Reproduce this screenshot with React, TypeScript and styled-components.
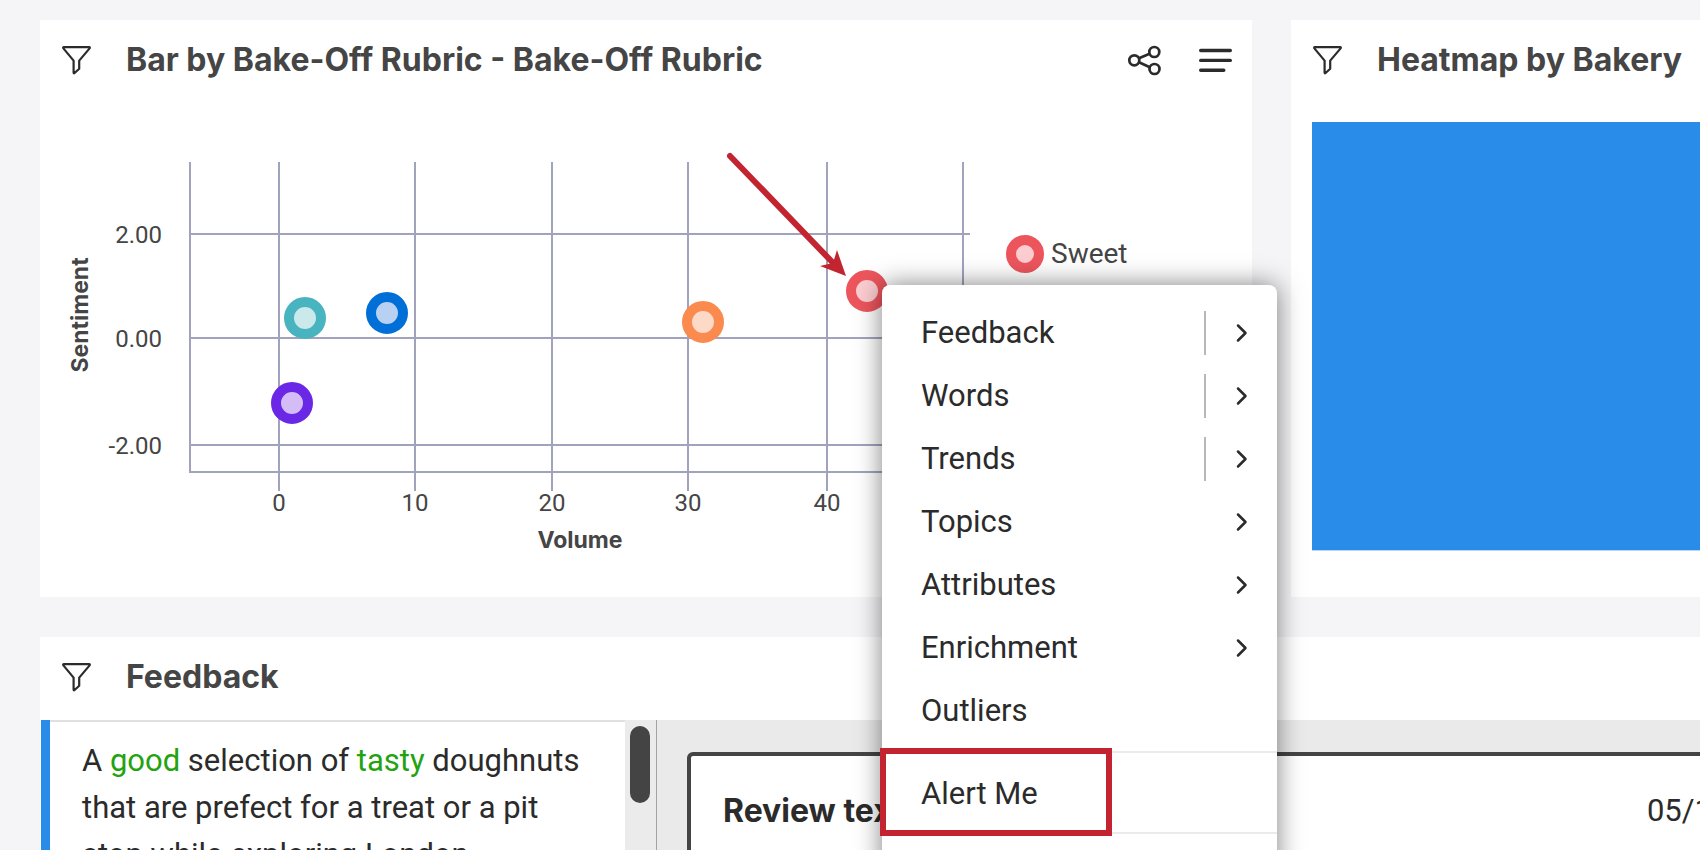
import React from 'react';
import styled, { createGlobalStyle } from 'styled-components';

const BODY_FONT = 'Roboto, "Liberation Sans", sans-serif';
const HEADING_FONT = 'Inter, "Liberation Sans", sans-serif';

const GlobalStyle = createGlobalStyle`
  *, *::before, *::after { box-sizing: border-box; }
  body {
    margin: 0;
    background: #f5f5f8;
    color: #2b2b2b;
    font-family: ${BODY_FONT};
    font-size: 31px;
  }
`;

const Page = styled.main`
  position: relative;
  display: flex;
  flex-direction: column;
  gap: 40px;
  height: 100vh;
  padding: 20px 0 0 40px;
  overflow: hidden;
`;

const TopRow = styled.div`
  display: grid;
  grid-template-columns: minmax(0, 1212fr) minmax(0, 409fr);
  gap: 39px;
`;

const Card = styled.section`
  display: flex;
  flex-direction: column;
  background: #fff;
`;

const ChartCard = styled(Card)`
  position: relative;
  height: 577px;
`;

const FeedbackCard = styled(Card)`
  flex: 1;
  min-height: 0;
`;

const CardHeader = styled.header`
  display: flex;
  flex: none;
  align-items: center;
  height: 83px;
  padding: 0 19px 3px;
`;

const IconButton = styled.button`
  display: flex;
  flex: none;
  align-items: center;
  justify-content: center;
  width: 35px;
  height: 40px;
  padding: 0;
  border: 0;
  background: none;
  color: #2b2b2b;
  cursor: pointer;
`;

const CardTitle = styled.h2`
  flex: 1;
  margin: 0 0 0 32px;
  color: #454545;
  font-family: ${HEADING_FONT};
  font-size: 32px;
  font-weight: 700;
  line-height: 40px;
  white-space: nowrap;
`;

const HeaderActions = styled.div`
  display: flex;
  gap: 36px;
`;

const ChartSvg = styled.svg`
  position: relative;
  display: block;
  width: 1212px;
  height: 494px;
`;

const Tick = styled.text`
  fill: #454545;
  font-family: ${BODY_FONT};
  font-size: 24px;
`;

const AxisTitle = styled.text`
  fill: #454545;
  font-family: ${HEADING_FONT};
  font-size: 23px;
  font-weight: 700;
  text-anchor: middle;
`;

const LegendLabel = styled.text`
  fill: #454545;
  font-family: ${BODY_FONT};
  font-size: 28px;
`;

const HeatmapCell = styled.div`
  height: 429px;
  margin: 19px 0 0 21px;
  border-bottom: 1px solid #b9d5f0;
  background: #288ce8;
`;

const FeedbackBody = styled.div`
  display: flex;
  flex: 1;
  min-height: 0;
`;

const ReviewList = styled.div`
  flex: none;
  width: 584px;
  margin-left: 1px;
  overflow: hidden;
`;

const ReviewItem = styled.article`
  display: flex;
  height: 200px;
`;

const SelectedBar = styled.div`
  flex: none;
  width: 9px;
  background: #288ce8;
`;

const ReviewText = styled.p`
  flex: 1;
  margin: 0;
  padding: 15px 20px 0 32px;
  border-top: 2px solid #e0e0e0;
  line-height: 47px;
`;

const Positive = styled.span`
  color: #22a30f;
`;

const ScrollTrack = styled.div`
  flex: none;
  width: 32px;
  padding: 6px 6px 0 5px;
  border-right: 1px solid #a3a3a3;
  background: #ebebeb;
`;

const ScrollThumb = styled.div`
  width: 20px;
  height: 77px;
  border-radius: 10px;
  background: #444;
`;

const DetailPane = styled.div`
  flex: 1;
  min-width: 0;
  padding: 32px 0 0 30px;
  overflow: hidden;
  background: #eaeaea;
`;

const DetailBox = styled.article`
  display: flex;
  justify-content: space-between;
  height: 200px;
  margin-right: -44px;
  padding: 35px 28px 0 32px;
  border: 4px solid #444;
  border-radius: 6px;
  background: #fff;
  line-height: 40px;
`;

const DetailTitle = styled.h3`
  margin: 0;
  font-family: ${HEADING_FONT};
  font-size: 32px;
  font-weight: 700;
`;

const Menu = styled.nav`
  position: absolute;
  z-index: 2;
  top: 265px;
  left: 842px;
  width: 395px;
  border-radius: 8px;
  background: #fff;
  box-shadow: 0 0 26px rgba(0, 0, 0, 0.5);
`;

const MenuGroup = styled.ul<{ $padding: string }>`
  margin: 0;
  padding: ${({ $padding }) => $padding};
  border-bottom: 2px solid #ebebeb;
  list-style: none;
`;

const MenuItem = styled.li`
  display: flex;
  align-items: center;
  height: 63px;
`;

const MenuLabel = styled.button`
  flex: 1;
  height: 100%;
  padding: 0 0 0 39px;
  border: 0;
  background: none;
  color: inherit;
  font: inherit;
  text-align: left;
  cursor: pointer;
`;

const SubmenuButton = styled.button<{ $divided: boolean }>`
  display: flex;
  align-items: center;
  justify-content: center;
  width: 73px;
  height: 44px;
  padding: 0;
  border: 0;
  border-left: 2px solid ${({ $divided }) => ($divided ? '#b8b8b8' : 'transparent')};
  background: none;
  color: #2b2b2b;
  cursor: pointer;
`;

const Highlight = styled.div`
  position: absolute;
  top: 463px;
  left: -2px;
  width: 232px;
  height: 88px;
  border: 6px solid #c22430;
  pointer-events: none;
`;

const FilterIcon = () => (
  <svg width="31" height="32" viewBox="0 0 31 32" fill="none" stroke="currentColor" strokeWidth="2.2" strokeLinejoin="round" aria-hidden="true">
    <path d="M2.9 3.2h25.2q1.200 0 .5 1.200L18.200 16.600v8.200L13.600 29q-1 .800-1-.500V16.600L2.400 4.400Q1.700 3.200 2.900 3.200z" />
  </svg>
);

const ShareIcon = () => (
  <svg width="35" height="32" viewBox="0 0 35 32" fill="none" stroke="currentColor" strokeWidth="2.7" aria-hidden="true">
    <circle cx="7.3" cy="16.3" r="5" />
    <circle cx="27.3" cy="8" r="5" />
    <circle cx="27.5" cy="25" r="5" />
    <path d="M12 14.300 22.600 9.800M12 18.300 22.800 23.200" />
  </svg>
);

const LinesIcon = () => (
  <svg width="35" height="32" viewBox="0 0 35 32" fill="none" stroke="currentColor" strokeWidth="3.4" strokeLinecap="round" aria-hidden="true">
    <path d="M2.700 6.500H32.300M2.700 16.400H32.300M2.700 26.300H25.800" />
  </svg>
);

const Chevron = () => (
  <svg width="12" height="20" viewBox="0 0 12 20" fill="none" stroke="currentColor" strokeWidth="2.5" strokeLinecap="round" strokeLinejoin="round" aria-hidden="true">
    <path d="M2 2.500 9.500 10 2 17.500" />
  </svg>
);

const X_TICKS = [
  { x: 239, label: '0' },
  { x: 375, label: '10' },
  { x: 512, label: '20' },
  { x: 648, label: '30' },
  { x: 787, label: '40' },
  { x: 923, label: '50' },
];

const Y_TICKS = [
  { y: 131, label: '2.00' },
  { y: 235, label: '0.00' },
  { y: 342, label: '-2.00' },
];

const POINTS = [
  { x: 265, y: 215, ring: '#48b4c0', core: '#cbe8ea' },
  { x: 347, y: 210, ring: '#006fd8', core: '#b8d1f2' },
  { x: 252, y: 300, ring: '#6a28e6', core: '#d4bdf7' },
  { x: 663, y: 219, ring: '#fa8a4d', core: '#fddac8' },
  { x: 827, y: 188, ring: '#ed555d', core: '#fbccd0' },
];

const BubbleChart = () => (
  <ChartSvg viewBox="0 0 1212 494" role="img" aria-label="Sentiment by volume">
    <g stroke="#a1a3bd" strokeWidth="2">
      <path d="M150 59V369H930" fill="none" />
      {X_TICKS.map(({ x }) => <path key={x} d={`M${x} 59V388`} />)}
      {Y_TICKS.map(({ y }) => <path key={y} d={`M150 ${y}H930`} />)}
    </g>
    {X_TICKS.map(({ x, label }) => <Tick key={label} x={x} y="408" textAnchor="middle">{label}</Tick>)}
    {Y_TICKS.map(({ y, label }) => <Tick key={label} x="122" y={y + 9} textAnchor="end">{label}</Tick>)}
    <AxisTitle x="540" y="445">Volume</AxisTitle>
    <AxisTitle transform="translate(48 212) rotate(-90)">Sentiment</AxisTitle>
    {POINTS.map(({ x, y, ring, core }) => (
      <circle key={x} cx={x} cy={y} r="16" fill={core} stroke={ring} strokeWidth="10" />
    ))}
    <circle cx="985" cy="151" r="14" fill="#fbccd0" stroke="#ed555d" strokeWidth="10" />
    <LegendLabel x="1011" y="160">Sweet</LegendLabel>
    <path d="M690 53 797 164" stroke="#c22430" strokeWidth="6" strokeLinecap="round" />
    <path d="M806 173 797 147 793 160 780 163z" fill="#c22430" />
  </ChartSvg>
);

const MENU_ITEMS = [
  { label: 'Feedback', submenu: true, divided: true },
  { label: 'Words', submenu: true, divided: true },
  { label: 'Trends', submenu: true, divided: true },
  { label: 'Topics', submenu: true, divided: false },
  { label: 'Attributes', submenu: true, divided: false },
  { label: 'Enrichment', submenu: true, divided: false },
  { label: 'Outliers', submenu: false, divided: false },
];

const ContextMenu = () => (
  <Menu aria-label="Drill options">
    <MenuGroup $padding="16px 0 9px">
      {MENU_ITEMS.map(({ label, submenu, divided }) => (
        <MenuItem key={label}>
          <MenuLabel type="button">{label}</MenuLabel>
          {submenu && (
            <SubmenuButton type="button" $divided={divided} aria-label={`Open ${label} submenu`}>
              <Chevron />
            </SubmenuButton>
          )}
        </MenuItem>
      ))}
    </MenuGroup>
    <MenuGroup $padding="9px 0 7px">
      <MenuItem>
        <MenuLabel type="button">Alert Me</MenuLabel>
      </MenuItem>
    </MenuGroup>
    <MenuGroup $padding="32px 0" />
    <Highlight />
  </Menu>
);

const Header = ({ title, children }: { title: string; children?: React.ReactNode }) => (
  <CardHeader>
    <IconButton type="button" aria-label={`Filter ${title}`}>
      <FilterIcon />
    </IconButton>
    <CardTitle>{title}</CardTitle>
    {children}
  </CardHeader>
);

export default function App() {
  return (
    <>
      <GlobalStyle />
      <Page>
        <TopRow>
          <ChartCard>
            <Header title="Bar by Bake-Off Rubric - Bake-Off Rubric">
              <HeaderActions>
                <IconButton type="button" aria-label="Share"><ShareIcon /></IconButton>
                <IconButton type="button" aria-label="Widget menu"><LinesIcon /></IconButton>
              </HeaderActions>
            </Header>
            <BubbleChart />
            <ContextMenu />
          </ChartCard>
          <Card>
            <Header title="Heatmap by Bakery" />
            <HeatmapCell />
          </Card>
        </TopRow>
        <FeedbackCard>
          <Header title="Feedback" />
          <FeedbackBody>
            <ReviewList>
              <ReviewItem>
                <SelectedBar />
                <ReviewText>
                  A <Positive>good</Positive> selection of <Positive>tasty</Positive> doughnuts that are prefect for a treat or a pit stop while exploring London
                </ReviewText>
              </ReviewItem>
            </ReviewList>
            <ScrollTrack><ScrollThumb /></ScrollTrack>
            <DetailPane>
              <DetailBox>
                <DetailTitle>Review text</DetailTitle>
                <time>05/1</time>
              </DetailBox>
            </DetailPane>
          </FeedbackBody>
        </FeedbackCard>
      </Page>
    </>
  );
}
